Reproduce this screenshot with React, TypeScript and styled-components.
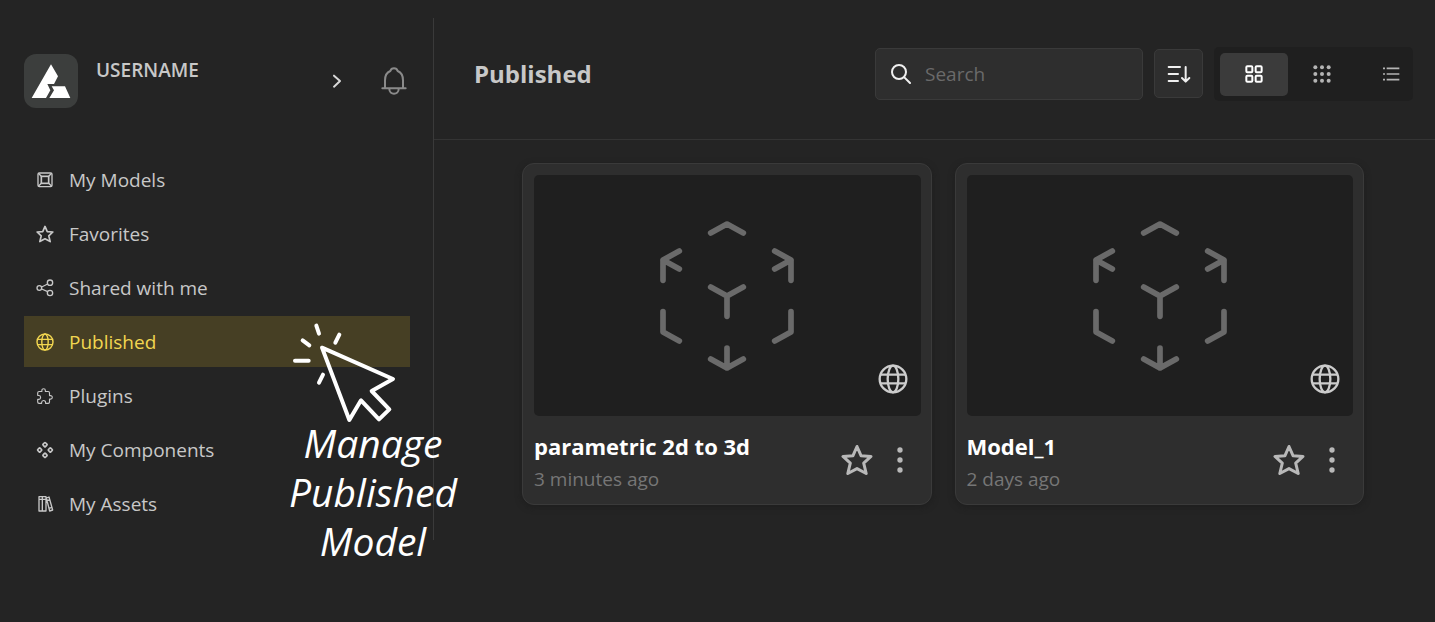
import React from "react";
import styled, { createGlobalStyle } from "styled-components";
import { IoExtensionPuzzleOutline } from "react-icons/io5";

const GlobalStyle = createGlobalStyle`
  * { box-sizing: border-box; }
  body {
    margin: 0;
    background: #242424;
    color: #c8c8c8;
    font-family: "Open Sans", "Noto Sans", sans-serif;
    font-size: 19px;
    line-height: 26px;
  }
  button, input { font: inherit; color: inherit; }
  svg { display: block; flex: none; }
`;

const Page = styled.div`
  position: relative;
  display: flex;
  align-items: flex-start;
  min-height: 100vh;
`;

const Sidebar = styled.aside`
  flex: 0 0 434px;
  margin-top: 18px;
  padding: 36px 23px 11px 24px;
  border-right: 1px solid #3a3a3a;
`;

const Profile = styled.header`
  display: flex;
  align-items: center;
  height: 54px;
  margin-bottom: 46px;
`;

const Avatar = styled.div`
  display: grid;
  place-items: center;
  width: 54px;
  height: 54px;
  border-radius: 12px;
  background: #3c3e3d;
`;

const UserName = styled.span`
  align-self: flex-start;
  margin-top: 3px;
  margin-left: 18px;
  flex: 1;
  font-weight: 600;
`;

const PlainButton = styled.button`
  display: grid;
  place-items: center;
  padding: 0;
  border: 0;
  background: none;
  cursor: pointer;
`;

const ExpandButton = styled(PlainButton)`
  width: 20px;
  height: 28px;
  margin-right: 34px;
`;

const BellButton = styled(PlainButton)`
  width: 26px;
  height: 30px;
  margin-right: 3px;
  color: #8a8a8a;
`;

const NavList = styled.ul`
  display: grid;
  gap: 3px;
  margin: 0;
  padding: 0;
  list-style: none;
`;

const NavLink = styled.a<{ $active?: boolean }>`
  display: flex;
  align-items: center;
  gap: 15px;
  height: 51px;
  padding-left: 12px;
  color: ${(p) => (p.$active ? "#f2d650" : "#c8c8c8")};
  background: ${(p) => (p.$active ? "#463f24" : "transparent")};
  text-decoration: none;
`;

const Main = styled.main`
  flex: 1;
  min-width: 0;
`;

const Toolbar = styled.header`
  display: flex;
  align-items: center;
  height: 140px;
  padding: 8px 22px 0 40px;
  border-bottom: 1px solid #343434;
`;

const Title = styled.h1`
  flex: 1;
  margin: 0;
  font-size: 24px;
  line-height: 32px;
  font-weight: 700;
`;

const SearchBox = styled.label`
  display: flex;
  align-items: center;
  gap: 14px;
  width: 268px;
  height: 52px;
  padding: 0 15px;
  border: 1px solid #3a3a3a;
  border-radius: 5px;
  background: #2e2e2e;
  color: #f0f0f0;
`;

const SearchInput = styled.input`
  flex: 1;
  min-width: 0;
  padding: 0;
  border: 0;
  outline: 0;
  background: none;
  &::placeholder { color: #6a6a6a; opacity: 1; }
`;

const SortButton = styled(PlainButton)`
  width: 49px;
  height: 49px;
  margin: 0 11px;
  border: 1px solid #3a3a3a;
  border-radius: 5px;
  background: #2e2e2e;
  color: #f0f0f0;
`;

const ViewSwitch = styled.div`
  display: flex;
  height: 54px;
  padding: 6px;
  border-radius: 5px;
  background: #1f1f1f;
`;

const ViewButton = styled(PlainButton)<{ $active?: boolean }>`
  width: 68px;
  height: 43px;
  border-radius: 5px;
  color: ${(p) => (p.$active ? "#ffffff" : "#b4b4b4")};
  background: ${(p) => (p.$active ? "#3b3b3b" : "transparent")};

  &:last-child {
    width: 51px;
    padding-left: 18px;
  }
`;

const CardGrid = styled.div`
  display: grid;
  grid-template-columns: 1fr 1fr;
  gap: 23px;
  padding: 23px 71px 23px 88px;
`;

const Card = styled.article`
  padding: 11px 10px 9px 11px;
  border: 1px solid #3a3a3a;
  border-radius: 12px;
  background: #2e2e2e;
  box-shadow: 0 2px 6px #1e1e1e;
`;

const Thumb = styled.div`
  position: relative;
  display: grid;
  place-items: center;
  height: 241px;
  border-radius: 5px;
  background: #1f1f1f;
  color: #6a6a6a;
`;

const PublicBadge = styled.span`
  position: absolute;
  right: 13px;
  bottom: 22px;
  color: #cccccc;
`;

const CardFooter = styled.div`
  display: flex;
  align-items: center;
  height: 79px;
`;

const CardText = styled.div`
  flex: 1;
  padding-top: 11px;
`;

const CardTitle = styled.h2`
  margin: 0;
  color: #ffffff;
  font-size: 22px;
  line-height: 36px;
  font-weight: 700;
`;

const CardTime = styled.p`
  margin: 0;
  color: #767676;
  line-height: 30px;
`;

const CardActions = styled.div`
  display: flex;
  align-items: center;
  gap: 17px;
  padding: 9px 11px 0 0;
  color: #b8b8b8;
`;

const StarButton = styled(PlainButton)`
  width: 32px;
  height: 32px;
`;

const MenuButton = styled(PlainButton)`
  width: 20px;
  height: 32px;
`;

const Callout = styled.div`
  position: absolute;
  top: 323px;
  left: 273px;
  width: 200px;
  color: #ffffff;
  pointer-events: none;
`;

const CalloutText = styled.p`
  margin: -5px 0 0;
  font-size: 39px;
  line-height: 49px;
  font-style: italic;
  text-align: center;
`;

const CalloutCursor = styled.svg`
  width: 107px;
  height: 100px;
  margin-left: 17px;
`;

const Logo = () => (
  <svg width="54" height="54" viewBox="72 71 162 162" fill="#fff" aria-hidden="true">
    <path d="M153 102 174 138 162 161H142l9 19-13 23H95z" />
    <path d="M155 168h40l16 35h-63l14-23z" />
  </svg>
);

const ChevronIcon = () => (
  <svg width="10" height="16" viewBox="0 0 30 48" fill="none" stroke="#d8d8d8" strokeWidth="6" strokeLinecap="round" strokeLinejoin="round" aria-hidden="true">
    <path d="M6 8 24 24 6 41" />
  </svg>
);

const BellIcon = () => (
  <svg width="26" height="30" viewBox="0 0 78 90" fill="none" stroke="currentColor" strokeWidth="6" strokeLinecap="round" strokeLinejoin="round" aria-hidden="true">
    <path d="M4 67H74M12 66V43C12 28 18 19 28 15 31 4 47 4 50 15 60 19 66 28 66 43V66M25 69C25 88 53 88 53 69" />
  </svg>
);

const ModelsIcon = () => (
  <svg width="18" height="18" viewBox="0 0 54 54" fill="none" stroke="currentColor" strokeWidth="4" aria-hidden="true">
    <rect x="6" y="6" width="42" height="41" rx="4" />
    <rect x="16" y="16" width="22" height="21" strokeWidth="5" />
    <path d="M7 7l9 9M47 7l-9 9M7 46l9-9M47 46l-9-9" />
  </svg>
);

const StarIcon = ({ size, stroke }: { size: number; stroke: number }) => (
  <svg width={size} height={size} viewBox="0 0 32 32" fill="none" stroke="currentColor" strokeWidth={stroke} strokeLinejoin="round" aria-hidden="true">
    <path d="M16 2.5 20 11.7 30 12.4 22.7 19.2 25.2 29.5 16 24.6 6.8 29.5 9.3 19.2 2 12.4 12 11.7z" />
  </svg>
);

const ShareIcon = () => (
  <svg width="18" height="18" viewBox="0 0 54 54" fill="none" stroke="currentColor" strokeWidth="4" aria-hidden="true">
    <circle cx="10" cy="27" r="7" />
    <circle cx="42" cy="11" r="8" />
    <circle cx="42" cy="42" r="8" />
    <path d="M17 24 35 15M17 30 35 38" />
  </svg>
);

const GlobeIcon = ({ size, stroke }: { size: number; stroke: number }) => (
  <svg width={size} height={size} viewBox="0 0 90 90" fill="none" stroke="currentColor" strokeWidth={stroke} aria-hidden="true">
    <circle cx="45" cy="45" r="40" />
    <ellipse cx="45" cy="45" rx="16" ry="40" />
    <path d="M7 32H83M7 58H83" />
  </svg>
);

const ComponentsIcon = () => (
  <svg width="18" height="18" viewBox="0 0 54 54" fill="none" stroke="currentColor" strokeWidth="5" aria-hidden="true">
    {[[27, 11], [11, 27], [43, 27], [27, 43]].map(([x, y]) => (
      <rect key={`${x}-${y}`} x={x - 5} y={y - 5} width="10" height="10" rx="2" transform={`rotate(45 ${x} ${y})`} />
    ))}
  </svg>
);

const AssetsIcon = () => (
  <svg width="18" height="18" viewBox="0 0 54 54" fill="none" stroke="currentColor" strokeWidth="4" strokeLinejoin="round" aria-hidden="true">
    <path d="M9 5h10v43H9zM19 5h11v43H19zM31 9l8-3 11 39-9 3zM9 13h10M19 13h11M33 17l9-3M39 40l9-3" />
  </svg>
);

const SearchIcon = () => (
  <svg width="20" height="20" viewBox="0 0 60 60" fill="none" stroke="currentColor" strokeWidth="6" strokeLinecap="round" aria-hidden="true">
    <circle cx="24" cy="24" r="21" />
    <path d="M40 40l17 17" />
  </svg>
);

const SortIcon = () => (
  <svg width="24" height="20" viewBox="0 0 72 60" fill="none" stroke="currentColor" strokeWidth="6" strokeLinecap="round" strokeLinejoin="round" aria-hidden="true">
    <path d="M5 9h34M5 30h28M5 51h28M56 9v43M45 42l11 11 11-11" />
  </svg>
);

const GridIcon = () => (
  <svg width="18" height="18" viewBox="0 0 54 54" fill="none" stroke="currentColor" strokeWidth="6" aria-hidden="true">
    {[[4, 4], [32, 4], [4, 32], [32, 32]].map(([x, y]) => (
      <rect key={`${x}-${y}`} x={x} y={y} width="18" height="18" rx="3" />
    ))}
  </svg>
);

const DotsIcon = () => (
  <svg width="18" height="18" viewBox="0 0 54 54" fill="currentColor" aria-hidden="true">
    {[7, 27, 47].map((y) => [7, 27, 47].map((x) => <circle key={`${x}-${y}`} cx={x} cy={y} r="6" />))}
  </svg>
);

const ListIcon = () => (
  <svg width="18" height="18" viewBox="0 0 54 54" fill="none" stroke="currentColor" strokeWidth="5" aria-hidden="true">
    <path d="M3 10h6M14 10h38M3 27h6M14 27h38M3 44h6M14 44h38" />
  </svg>
);

const CubeArt = () => (
  <svg width="136" height="152" viewBox="60 57 408 456" fill="none" stroke="currentColor" strokeWidth="17" strokeLinecap="round" strokeLinejoin="round" aria-hidden="true">
    <path d="M215 96 264 69 313 96M215 258 264 285 313 258M264 285V346M215 474 264 501 313 474M264 501V441M121 150 72 177V238M72 177 121 204M407 150 456 177V238M456 177 407 204M72 332V393L121 420M456 332V393L407 420" />
  </svg>
);

const KebabIcon = () => (
  <svg width="8" height="28" viewBox="0 0 24 84" fill="currentColor" aria-hidden="true">
    <circle cx="12" cy="12" r="8" />
    <circle cx="12" cy="42" r="8" />
    <circle cx="12" cy="72" r="8" />
  </svg>
);

const navItems = [
  { label: "My Models", icon: <ModelsIcon /> },
  { label: "Favorites", icon: <StarIcon size={18} stroke={3} /> },
  { label: "Shared with me", icon: <ShareIcon /> },
  { label: "Published", icon: <GlobeIcon size={18} stroke={7} />, active: true },
  { label: "Plugins", icon: <IoExtensionPuzzleOutline size={18} /> },
  { label: "My Components", icon: <ComponentsIcon /> },
  { label: "My Assets", icon: <AssetsIcon /> },
];

const models = [
  { name: "parametric 2d to 3d", time: "3 minutes ago" },
  { name: "Model_1", time: "2 days ago" },
];

export default function App() {
  return (
    <>
      <GlobalStyle />
      <Page>
        <Sidebar>
          <Profile>
            <Avatar><Logo /></Avatar>
            <UserName>USERNAME</UserName>
            <ExpandButton aria-label="Open account"><ChevronIcon /></ExpandButton>
            <BellButton aria-label="Notifications"><BellIcon /></BellButton>
          </Profile>
          <nav>
            <NavList>
              {navItems.map((item) => (
                <li key={item.label}>
                  <NavLink href="#" $active={item.active} aria-current={item.active ? "page" : undefined}>
                    {item.icon}
                    {item.label}
                  </NavLink>
                </li>
              ))}
            </NavList>
          </nav>
        </Sidebar>
        <Main>
          <Toolbar>
            <Title>Published</Title>
            <SearchBox>
              <SearchIcon />
              <SearchInput type="search" placeholder="Search" aria-label="Search" />
            </SearchBox>
            <SortButton aria-label="Sort"><SortIcon /></SortButton>
            <ViewSwitch>
              <ViewButton $active aria-label="Large grid" aria-pressed="true"><GridIcon /></ViewButton>
              <ViewButton aria-label="Small grid" aria-pressed="false"><DotsIcon /></ViewButton>
              <ViewButton aria-label="List" aria-pressed="false"><ListIcon /></ViewButton>
            </ViewSwitch>
          </Toolbar>
          <CardGrid>
            {models.map((model) => (
              <Card key={model.name}>
                <Thumb>
                  <CubeArt />
                  <PublicBadge><GlobeIcon size={30} stroke={7} /></PublicBadge>
                </Thumb>
                <CardFooter>
                  <CardText>
                    <CardTitle>{model.name}</CardTitle>
                    <CardTime>{model.time}</CardTime>
                  </CardText>
                  <CardActions>
                    <StarButton aria-label="Add to favorites"><StarIcon size={32} stroke={3} /></StarButton>
                    <MenuButton aria-label="More actions"><KebabIcon /></MenuButton>
                  </CardActions>
                </CardFooter>
              </Card>
            ))}
          </CardGrid>
        </Main>
        <Callout>
          <CalloutCursor viewBox="60 39 321 300" fill="none" stroke="currentColor" strokeWidth="12" strokeLinecap="round" strokeLinejoin="round" aria-hidden="true">
            <path d="M156 113 369 207 305 243 358 298 327 328 273 271 238 330z" />
            <path d="M139 47 147 71M208 74 196 98M98 91 118 106M75 152H116M159 194 147 218" />
          </CalloutCursor>
          <CalloutText>Manage Published Model</CalloutText>
        </Callout>
      </Page>
    </>
  );
}
